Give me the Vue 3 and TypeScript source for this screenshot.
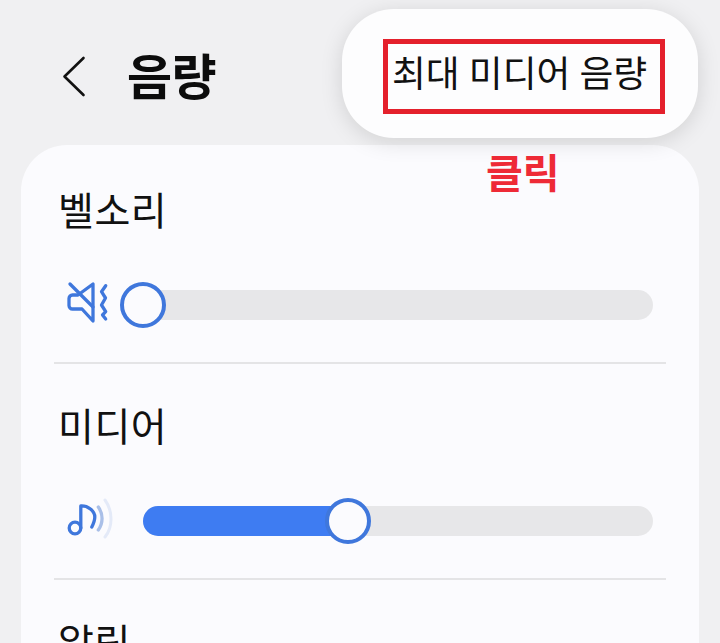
<script setup lang="ts">
interface Row { label: string; value: number; icon: string }
const rows: Row[] = [
  { label: '벨소리', value: 0, icon: 'mute' },
  { label: '미디어', value: 40.2, icon: 'note' },
]
</script>

<template>
  <div class="page">
    <header class="top">
      <svg class="back" width="26" height="42" viewBox="0 0 26 42" fill="none">
        <path d="M22.500 3 3.500 21.500 22.500 40" stroke="#111" stroke-width="2.600" stroke-linecap="round" stroke-linejoin="round" />
      </svg>
      <h1 class="title">음량</h1>
    </header>

    <section class="card">
      <div v-for="row in rows" :key="row.label" class="row">
        <div class="label">{{ row.label }}</div>
        <div class="control">
          <svg v-if="row.icon === 'mute'" class="icon" width="50" height="52" viewBox="0 0 50 52" fill="none" stroke="#3f77dc" stroke-width="3.300" stroke-linecap="round" stroke-linejoin="round">
            <path d="M8 5 31 28" />
            <path d="M31 5V42L20 30H10.500a3.500 3.500 0 0 1-3.500-3.500V19.500a3.500 3.500 0 0 1 3.500-3.500H16Z" />
            <path d="M43.700 6.700 39.500 12.700 43.500 19 39.500 26 43.700 32.700 40.500 36 43.700 40" />
          </svg>
          <svg v-else class="icon" width="54" height="52" viewBox="0 0 54 52" fill="none" stroke-linecap="round" stroke-linejoin="round">
            <circle cx="13" cy="33" r="5.800" stroke="#3f77dc" stroke-width="3.300" />
            <path d="M18.800 33V11c7-.5 14 5 14 11 0 4-1 6-3 10" stroke="#3f77dc" stroke-width="3.300" />
            <path d="M36.300 12c5 7 5 16 0 23" stroke="#a9bfe8" stroke-width="3.300" />
            <path d="M43 5c8 11 8 27 0 37" stroke="#e4eaf8" stroke-width="3" />
          </svg>
          <div class="track">
            <div class="fill" :style="{ width: row.value + '%' }"></div>
            <div class="thumb" :style="{ left: row.value + '%' }"></div>
          </div>
        </div>
      </div>
      <div class="label partial">알림</div>
    </section>

    <div class="popup">
      <div class="outline">최대 미디어 음량</div>
    </div>
    <div class="note">클릭</div>
  </div>
</template>

<style>
html, body { margin: 0; background: #f0f0f2; }
body { overflow: hidden; }
</style>

<style scoped>
.page {
  position: relative;
  width: 720px;
  height: 643px;
  overflow: hidden;
  background: #f0f0f2;
  font-family: Roboto, "Noto Sans CJK KR", sans-serif;
  color: #111;
}
.top {
  height: 146px;
  box-sizing: border-box;
  padding: 55px 0 0 61px;
  display: flex;
  align-items: flex-start;
  gap: 40px;
}
.back { flex: none; }
.title {
  margin: -5px 0 0;
  font-size: 49px;
  line-height: 58px;
  font-weight: 700;
  letter-spacing: -0.5px;
  color: #0c0c0c;
}
.card {
  margin: 0 21px;
  height: 560px;
  box-sizing: border-box;
  padding: 0 33px;
  background: #fbfbfe;
  border-radius: 46px 46px 0 0;
}
.row {
  height: 219px;
  margin-top: -1px;
  box-sizing: border-box;
  border-bottom: 2px solid #e4e4e6;
  padding-top: 40px;
  margin-bottom: -1px;
  display: flex;
  flex-direction: column;
}
.row + .row { height: 217px; padding-top: 38px; margin-top: 0; }
.label {
  padding-left: 4px;
  font-size: 39px;
  line-height: 54px;
  letter-spacing: 0.5px;
}
.partial { padding-top: 38px; }
.control {
  position: relative;
  display: flex;
  align-items: center;
  height: 52px;
  margin-top: 40px;
}
.icon {
  position: absolute;
  left: 8px;
  top: 0;
}
.track {
  position: relative;
  margin-left: 89px;
  width: 510px;
  height: 30px;
  border-radius: 15px;
  background: #e7e7e9;
}
.fill {
  height: 100%;
  border-radius: 15px;
  background: #3e7cf2;
}
.thumb {
  position: absolute;
  top: 50%;
  width: 46px;
  height: 46px;
  box-sizing: border-box;
  border: 4px solid #3f77dc;
  border-radius: 50%;
  background: #fbfbfe;
  transform: translate(-50%, -50%);
}
.popup {
  position: absolute;
  left: 342px;
  top: 9px;
  width: 356px;
  height: 129px;
  box-sizing: border-box;
  padding: 30px 33px 24px 41px;
  background: #fdfdfe;
  border-radius: 52px;
  box-shadow: 0 4px 22px rgba(0, 0, 0, 0.13);
}
.outline {
  height: 75px;
  box-sizing: border-box;
  border: 5px solid #e4202c;
  padding-left: 4px;
  font-size: 36.800px;
  line-height: 62px;
  white-space: nowrap;
  color: #111;
}
.note {
  position: absolute;
  left: 486px;
  top: 151px;
  font-size: 40px;
  line-height: 48px;
  font-weight: 700;
  color: #ee2a36;
}
</style>
